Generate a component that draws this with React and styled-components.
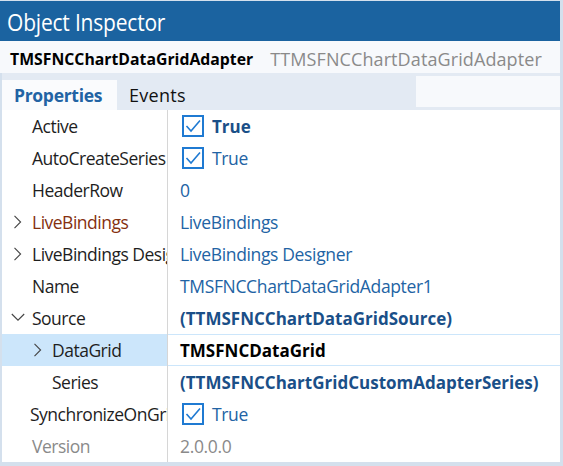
import React from "react";
import styled, { createGlobalStyle } from "styled-components";

const GlobalStyle = createGlobalStyle`
  html, body {
    margin: 0;
    padding: 0;
    background: #ffffff;
  }
  body {
    font-family: "Open Sans", "Noto Sans", "Liberation Sans", sans-serif;
  }
`;

const setColor = {
  title: "#1b63a0",
  frame: "#d4e0ed",
  header: "#f7f9fc",
  strip: "#e3eaf3",
  label: "#1e1e1e",
  value: "#2263a4",
  strong: "#1a4f88",
  muted: "#8a8a8a",
  binding: "#85300f",
  select: "#cce6fb",
  check: "#1f7ad2",
};

const Window = styled.div`
  width: 563px;
  height: 466px;
  box-sizing: border-box;
  background: ${setColor.frame};
  padding: 0 3px 4px 0;
  display: flex;
  flex-flow: column nowrap;
  overflow: hidden;
`;

const TitleBar = styled.div`
  height: 40px;
  margin-top: 1px;
  flex: none;
  background: ${setColor.title};
  color: #fff;
  font-size: 21px;
  display: flex;
  align-items: center;
  padding: 1px 0 0 7px;
  box-sizing: border-box;
  letter-spacing: -0.2px;
  span {
    display: inline-block;
    transform: scaleY(1.12);
  }
`;

const Header = styled.div`
  height: 32px;
  flex: none;
  background: ${setColor.header};
  display: flex;
  align-items: center;
  padding: 3px 0 0 10px;
  box-sizing: border-box;
  white-space: nowrap;
  b {
    color: #000;
    font-weight: 700;
    font-size: 15.8px;
    margin-right: 17px;
  }
  span {
    color: ${setColor.muted};
    font-size: 18px;
    letter-spacing: 0.1px;
  }
`;

const Body = styled.div`
  flex: 1;
  margin-left: 2px;
  background: #fff;
  display: flex;
  flex-flow: column nowrap;
  overflow: hidden;
`;

const TabStrip = styled.div`
  height: 37px;
  flex: none;
  background: ${setColor.strip};
  display: flex;
  align-items: flex-end;
`;

const Tab = styled.div`
  height: 30px;
  box-sizing: border-box;
  display: flex;
  align-items: center;
  padding: ${(p) => (p.$active ? "0 0 0 12px" : "0 0 0 12px")};
  width: ${(p) => (p.$active ? "115px" : "auto")};
  background: ${(p) => (p.$active ? "#fafbfd" : "transparent")};
  color: ${(p) => (p.$active ? setColor.value : "#111")};
  font-weight: ${(p) => (p.$active ? 700 : 400)};
  font-size: ${(p) => (p.$active ? "17.5px" : "18px")};
  letter-spacing: ${(p) => (p.$active ? "-0.3px" : "0.3px")};
`;

const Filler = styled.div`
  width: 144px;
  margin: 3px 0 3px auto;
  align-self: stretch;
  background: ${setColor.header};
`;

const Grid = styled.div`
  display: grid;
  grid-template-columns: 166px 1fr;
  grid-auto-rows: 32px;
  font-size: 17.5px;
`;

const NameCell = styled.div`
  display: flex;
  align-items: center;
  padding-left: ${(p) => p.$indent}px;
  border-right: 1px solid #d6d6d6;
  white-space: nowrap;
  overflow: hidden;
  letter-spacing: -0.5px;
  background: ${(p) => (p.$selected ? setColor.select : "transparent")};
  color: ${(p) =>
    p.$muted ? setColor.muted : p.$binding ? setColor.binding : setColor.label};
`;

const ValueCell = styled.div`
  display: flex;
  align-items: center;
  padding-left: 12px;
  white-space: nowrap;
  overflow: hidden;
  box-sizing: border-box;
  font-size: ${(p) => (p.$bold ? "17px" : "17.5px")};
  letter-spacing: ${(p) => (p.$bold ? "0" : "-0.35px")};
  color: ${(p) =>
    p.$tone === "black"
      ? "#000"
      : p.$tone === "muted"
      ? setColor.muted
      : p.$bold
      ? setColor.strong
      : setColor.value};
  font-weight: ${(p) => (p.$bold ? 700 : 400)};
  border-top: 1px solid ${(p) => (p.$selected ? setColor.select : "transparent")};
  border-bottom: 1px solid ${(p) => (p.$selected ? setColor.select : "transparent")};
`;

const Chevron = styled.svg`
  width: 14px;
  height: 16px;
  margin-right: 7px;
  flex: none;
`;

const Check = styled.svg`
  width: 22px;
  height: 22px;
  margin: 0 8px 0 2px;
  flex: none;
`;

const Arrow = ({ open }) => (
  <Chevron viewBox="0 0 14 16">
    {open ? (
      <path d="M0.8 4 L7 10.2 L13.2 4" fill="none" stroke="#444" strokeWidth="1.1" />
    ) : (
      <path d="M3.5 1.8 L9.6 8 L3.5 14.2" fill="none" stroke="#444" strokeWidth="1.1" />
    )}
  </Chevron>
);

const CheckBox = () => (
  <Check viewBox="0 0 22 22">
    <rect x="1" y="1" width="20" height="20" fill="#fff" stroke={setColor.check} strokeWidth="2" />
    <path d="M4.5 11 L9 16 L18 5.5" fill="none" stroke={setColor.check} strokeWidth="1.6" />
  </Check>
);

const rows = [
  { name: "Active", indent: 30, value: "True", check: true, bold: true },
  { name: "AutoCreateSeries", indent: 30, value: "True", check: true },
  { name: "HeaderRow", indent: 30, value: "0" },
  { name: "LiveBindings", indent: 9, arrow: "closed", binding: true, value: "LiveBindings" },
  { name: "LiveBindings Designer", indent: 9, arrow: "closed", value: "LiveBindings Designer" },
  { name: "Name", indent: 30, value: "TMSFNCChartDataGridAdapter1" },
  { name: "Source", indent: 9, arrow: "open", value: "(TTMSFNCChartDataGridSource)", bold: true },
  { name: "DataGrid", indent: 29, arrow: "closed", value: "TMSFNCDataGrid", bold: true, tone: "black", selected: true },
  { name: "Series", indent: 50, value: "(TTMSFNCChartGridCustomAdapterSeries)", bold: true },
  { name: "SynchronizeOnGridChange", indent: 28, value: "True", check: true },
  { name: "Version", indent: 30, value: "2.0.0.0", muted: true, tone: "muted" },
];

const App = () => {
  return (
    <>
      <GlobalStyle />
      <Window>
        <TitleBar>
          <span>Object Inspector</span>
        </TitleBar>
        <Header>
          <b>TMSFNCChartDataGridAdapter</b>
          <span>TTMSFNCChartDataGridAdapter</span>
        </Header>
        <Body>
          <TabStrip>
            <Tab $active>Properties</Tab>
            <Tab>Events</Tab>
            <Filler />
          </TabStrip>
          <Grid>
            {rows.map((r) => (
              <React.Fragment key={r.name}>
                <NameCell
                  $indent={r.indent}
                  $selected={r.selected}
                  $muted={r.muted}
                  $binding={r.binding}
                >
                  {r.arrow && <Arrow open={r.arrow === "open"} />}
                  {r.name}
                </NameCell>
                <ValueCell $bold={r.bold} $tone={r.tone} $selected={r.selected}>
                  {r.check && <CheckBox />}
                  {r.value}
                </ValueCell>
              </React.Fragment>
            ))}
          </Grid>
        </Body>
      </Window>
    </>
  );
};

export default App;
